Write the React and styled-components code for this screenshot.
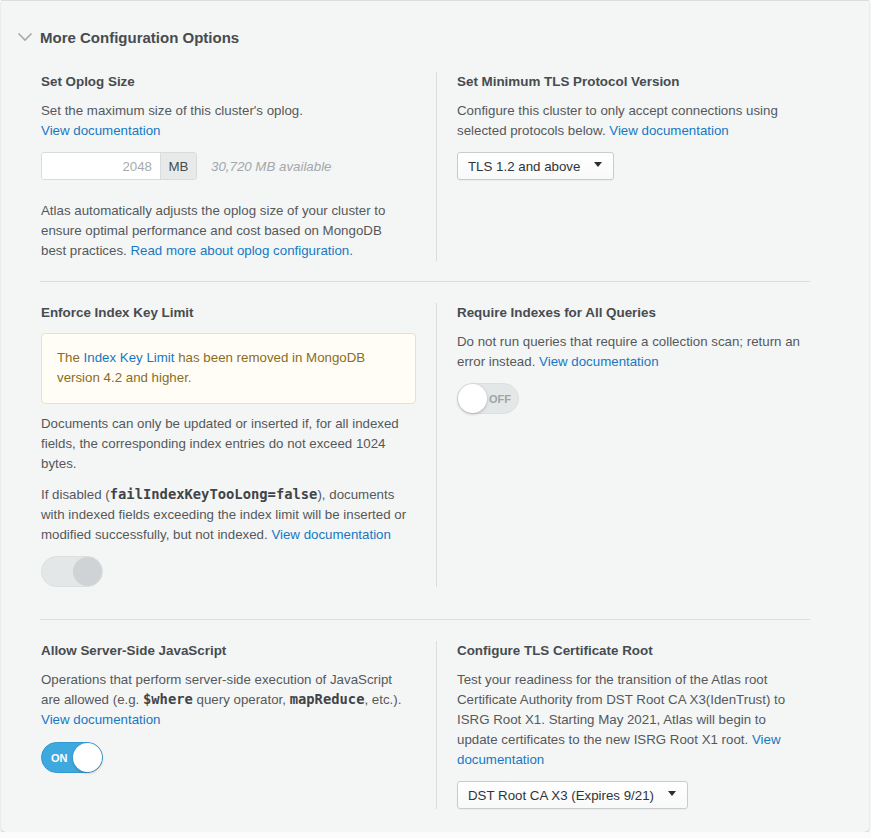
import React from "react";
import styled, { createGlobalStyle } from "styled-components";

const GlobalStyle = createGlobalStyle`
  body {
    margin: 0;
    background: #fafbfb;
    font-family: "Liberation Sans", Arial, sans-serif;
  }
`;

const Card = styled.div`
  width: 868px;
  margin-left: 1px;
  background: #f4f5f5;
  border-top: 1px solid #dcdede;
  border-radius: 0 0 5px 5px;
  box-shadow: 0 2px 3px rgba(0, 0, 0, 0.18);
  padding-bottom: 3px;
`;

const Header = styled.div`
  display: flex;
  align-items: center;
  height: 20px;
  padding: 26px 0 0 16px;
  gap: 7px;
`;

const HeaderTitle = styled.h2`
  margin: 0;
  font-size: 15px;
  font-weight: bold;
  color: #464c4f;
`;

const Body = styled.div`
  padding: 5px 59px 0 39px;
`;

const Row = styled.div`
  display: grid;
  grid-template-columns: 396px 1fr;
  padding: ${(p) => (p.$first ? 20 : 21)}px 0 ${(p) => p.$bottom || 20}px;
  border-top: ${(p) => (p.$first ? "none" : "1px solid #dadcdd")};
`;

const Cell = styled.div`
  padding: ${(p) => (p.$right ? "0 3px 0 20px" : "0 20px 0 1px")};
  border-left: ${(p) => (p.$right ? "1px solid #dadcdd" : "none")};
`;

const Title = styled.h3`
  margin: 0 0 9px;
  font-size: 13.4px;
  line-height: 20px;
  font-weight: bold;
  color: #464c4f;
`;

const Text = styled.p`
  margin: ${(p) => p.$top || 0}px 0 0;
  max-width: ${(p) => (p.$narrow ? "368px" : "none")};
  font-size: 13.3px;
  line-height: 20px;
  color: #54595c;
`;

const Link = styled.a`
  color: #1479c4;
  text-decoration: none;
`;

const Code = styled.code`
  font-family: "DejaVu Sans Mono", "Liberation Mono", monospace;
  font-weight: bold;
  font-size: 13.8px;
  line-height: 1;
  color: #3f4447;
`;

const InputRow = styled.div`
  display: flex;
  align-items: center;
  margin-top: 11px;
`;

const InputGroup = styled.div`
  display: flex;
  height: 28px;
  border: 1px solid #d9dcdd;
  border-radius: 3px;
  overflow: hidden;
  box-sizing: border-box;
`;

const NumberField = styled.div`
  width: 118px;
  background: #fff;
  display: flex;
  align-items: center;
  justify-content: flex-end;
  padding-right: 8px;
  box-sizing: border-box;
  font-size: 13.3px;
  color: #a7abae;
`;

const Addon = styled.div`
  width: 35px;
  background: #e8eaea;
  border-left: 1px solid #d9dcdd;
  display: flex;
  align-items: center;
  justify-content: center;
  font-size: 13.3px;
  color: #444a4d;
`;

const Hint = styled.span`
  margin-left: 14px;
  font-size: 13.3px;
  font-style: italic;
  color: #a3a8ab;
`;

const Select = styled.div`
  display: flex;
  width: fit-content;
  align-items: center;
  gap: 14px;
  height: 28px;
  box-sizing: border-box;
  margin-top: 11px;
  padding: 0 11px 0 10px;
  background: linear-gradient(#ffffff, #f9f9f9);
  border: 1px solid #c9cccd;
  border-radius: 3px;
  box-shadow: 0 1px 1px rgba(0, 0, 0, 0.04);
  font-size: 13.3px;
  color: #2f3437;
`;

const Caret = styled.span`
  width: 0;
  height: 0;
  border-left: 4.5px solid transparent;
  border-right: 4.5px solid transparent;
  border-top: 5px solid #2b2f31;
  margin-top: -3px;
`;

const Warning = styled.div`
  margin-top: 10px;
  padding: 14px 15px 15px;
  background: #fffdf6;
  border: 1px solid #f2e0b8;
  border-radius: 4px;
  font-size: 13.3px;
  line-height: 20px;
  color: #8a6d22;
`;

const Toggle = styled.div`
  position: relative;
  width: 62px;
  height: 31px;
  margin-top: ${(p) => p.$top || 11}px;
  box-sizing: border-box;
  border-radius: 16px;
  border: 1px solid ${(p) => (p.$on ? "#3399cf" : "#dcdfe0")};
  background: ${(p) => (p.$on ? "#3ea9df" : "#e4e7e8")};
  display: flex;
  align-items: center;
  justify-content: ${(p) => (p.$on ? "flex-start" : "flex-end")};
  padding: 0 ${(p) => (p.$on ? 0 : 7)}px 0 ${(p) => (p.$on ? 9 : 0)}px;
  font-size: 11px;
  font-weight: bold;
  color: ${(p) => (p.$on ? "#ffffff" : "#9ea4a7")};
`;

const Knob = styled.span`
  position: absolute;
  top: 0;
  ${(p) => (p.$right ? "right: 0;" : "left: 0;")}
  width: 29px;
  height: 29px;
  border-radius: 50%;
  background: ${(p) => (p.$disabled ? "#cfd3d5" : "#ffffff")};
  box-shadow: ${(p) =>
    p.$disabled ? "none" : "0 1px 3px rgba(0, 0, 0, 0.25)"};
`;

const Chevron = () => (
  <svg width="16" height="10" viewBox="0 0 16 10">
    <path
      d="M1.5 1.5 L8 8 L14.5 1.5"
      fill="none"
      stroke="#a4aaad"
      strokeWidth="1.6"
    />
  </svg>
);

const App = () => {
  return (
    <>
      <GlobalStyle />
      <Card>
        <Header>
          <Chevron />
          <HeaderTitle>More Configuration Options</HeaderTitle>
        </Header>
        <Body>
          <Row $first>
            <Cell>
              <Title>Set Oplog Size</Title>
              <Text $narrow>
                Set the maximum size of this cluster's oplog.
                <br />
                <Link>View documentation</Link>
              </Text>
              <InputRow>
                <InputGroup>
                  <NumberField>2048</NumberField>
                  <Addon>MB</Addon>
                </InputGroup>
                <Hint>30,720 MB available</Hint>
              </InputRow>
              <Text $narrow $top={21}>
                Atlas automatically adjusts the oplog size of your cluster to
                ensure optimal performance and cost based on MongoDB best
                practices. <Link>Read more about oplog configuration.</Link>
              </Text>
            </Cell>
            <Cell $right>
              <Title>Set Minimum TLS Protocol Version</Title>
              <Text>
                Configure this cluster to only accept connections using
                selected protocols below. <Link>View documentation</Link>
              </Text>
              <Select>
                TLS 1.2 and above
                <Caret />
              </Select>
            </Cell>
          </Row>

          <Row $bottom={32}>
            <Cell>
              <Title>Enforce Index Key Limit</Title>
              <Warning>
                The <Link>Index Key Limit</Link> has been removed in MongoDB
                version 4.2 and higher.
              </Warning>
              <Text $narrow $top={10}>
                Documents can only be updated or inserted if, for all indexed
                fields, the corresponding index entries do not exceed 1024
                bytes.
              </Text>
              <Text $narrow $top={11}>
                If disabled (<Code>failIndexKeyTooLong=false</Code>), documents
                with indexed fields exceeding the index limit will be inserted
                or modified successfully, but not indexed.{" "}
                <Link>View documentation</Link>
              </Text>
              <Toggle>
                <Knob $right $disabled />
              </Toggle>
            </Cell>
            <Cell $right>
              <Title>Require Indexes for All Queries</Title>
              <Text>
                Do not run queries that require a collection scan; return an
                error instead. <Link>View documentation</Link>
              </Text>
              <Toggle>
                <Knob />
                OFF
              </Toggle>
            </Cell>
          </Row>

          <Row>
            <Cell>
              <Title>Allow Server-Side JavaScript</Title>
              <Text $narrow>
                Operations that perform server-side execution of JavaScript
                are allowed (e.g. <Code>$where</Code> query operator,{" "}
                <Code>mapReduce</Code>, etc.).
                <br />
                <Link>View documentation</Link>
              </Text>
              <Toggle $on $top={12}>
                ON
                <Knob $right />
              </Toggle>
            </Cell>
            <Cell $right>
              <Title>Configure TLS Certificate Root</Title>
              <Text>
                Test your readiness for the transition of the Atlas root
                Certificate Authority from DST Root CA X3(IdenTrust) to ISRG
                Root X1. Starting May 2021, Atlas will begin to update
                certificates to the new ISRG Root X1 root.{" "}
                <Link>View documentation</Link>
              </Text>
              <Select>
                DST Root CA X3 (Expires 9/21)
                <Caret />
              </Select>
            </Cell>
          </Row>
        </Body>
      </Card>
    </>
  );
};

export default App;
